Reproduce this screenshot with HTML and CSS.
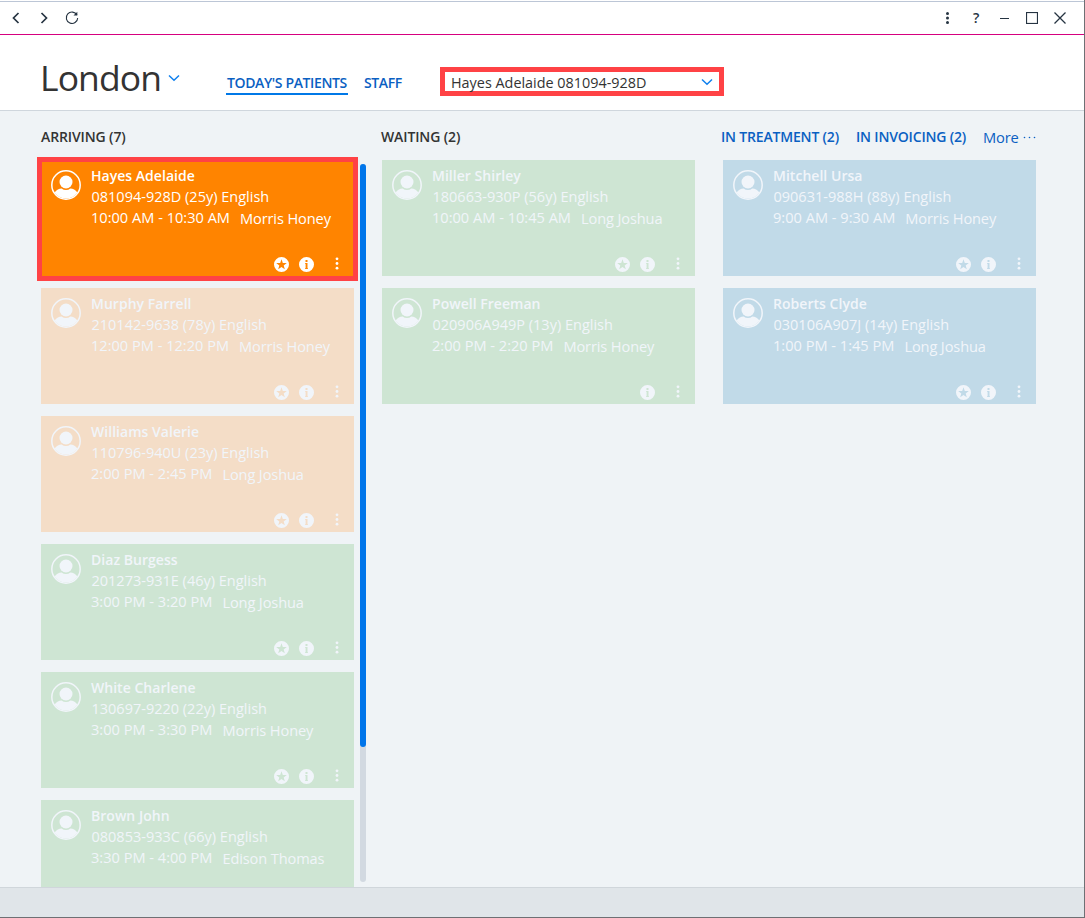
FILE: index.html
```
<!DOCTYPE html>
<html lang="en">
<head>
<meta charset="utf-8">
<title>London – Today's patients</title>
<link rel="stylesheet" href="styles.css">
</head>
<body>
<svg class="sprite" aria-hidden="true">
  <symbol id="avatar" viewBox="0 0 30 30">
    <circle cx="15" cy="15" r="14.2" fill="none" stroke="currentColor" stroke-width="1.5"/>
    <circle cx="15" cy="12" r="6.5" fill="currentColor"/>
    <path d="M3.6 22.6C5.6 19.6 8 18.6 10.6 18.4Q12.600 20 15 20Q17.400 20 19.400 18.400C22 18.600 24.400 19.600 26.400 22.600A14 14 0 0 1 3.600 22.600Z" fill="currentColor"/>
  </symbol>
  <symbol id="star" viewBox="0 0 15 15">
    <path fill-rule="evenodd" fill="currentColor" d="M7.500 0A7.500 7.500 0 1 1 7.500 15A7.500 7.500 0 1 1 7.500 0ZM7.500 2.200L6.200 5.900L2.200 6.100L5.300 8.500L4.200 12.300L7.500 10.100L10.800 12.300L9.700 8.500L12.800 6.100L8.800 5.900Z"/>
  </symbol>
  <symbol id="info" viewBox="0 0 15 15">
    <path fill-rule="evenodd" fill="currentColor" d="M7.500 0A7.500 7.500 0 1 1 7.500 15A7.500 7.500 0 1 1 7.500 0ZM6.500 3V5H8.500V3ZM6 6V6.700H6.600V11.300H6V12H9V11.300H8.500V6Z"/>
  </symbol>
  <symbol id="dots" viewBox="0 0 4 14">
    <circle cx="2" cy="1.800" r="1.400" fill="currentColor"/><circle cx="2" cy="6.500" r="1.400" fill="currentColor"/><circle cx="2" cy="11.200" r="1.400" fill="currentColor"/>
  </symbol>
  <symbol id="chevron" viewBox="0 0 12 8">
    <path d="M1 1.500L6 6.300L11 1.500" fill="none" stroke="currentColor" stroke-width="1.500"/>
  </symbol>
</svg>
<div class="window">
  <div class="titlebar">
    <div class="nav">
      <svg width="8" height="12" viewBox="0 0 8 12"><path d="M6.500 1L1.500 6L6.500 11" fill="none" stroke="currentColor" stroke-width="1.700"/></svg>
      <svg width="8" height="12" viewBox="0 0 8 12"><path d="M1.500 1L6.500 6L1.500 11" fill="none" stroke="currentColor" stroke-width="1.700"/></svg>
      <svg width="14" height="14" viewBox="0 0 14 14"><path d="M12 4A5.700 5.700 0 1 0 12.700 7" fill="none" stroke="currentColor" stroke-width="1.100"/><path d="M12.300 .8V4.600H8.500Z" fill="currentColor"/></svg>
    </div>
    <div class="controls">
      <svg width="4" height="12" viewBox="0 0 4 12"><circle cx="1.500" cy="1.600" r="1.500"/><circle cx="1.500" cy="6" r="1.500"/><circle cx="1.500" cy="10.400" r="1.500"/></svg>
      <span class="help">?</span>
      <svg width="10" height="12" viewBox="0 0 10 12"><path d="M0 6.500H9" stroke="currentColor"/></svg>
      <svg width="12" height="12" viewBox="0 0 12 12"><rect x=".5" y=".5" width="11" height="11" fill="none" stroke="currentColor" stroke-width="1.200"/></svg>
      <svg width="12" height="12" viewBox="0 0 12 12"><path d="M.5 .5L11.500 11.500M11.500 .5L.5 11.500" stroke="currentColor" stroke-width="1.300"/></svg>
    </div>
  </div>
  <header class="header">
    <h1 class="site">London</h1>
    <svg class="site-chevron" width="12" height="8"><use href="#chevron"/></svg>
    <nav class="tabs"><a class="tab active">TODAY'S PATIENTS</a><a class="tab staff">STAFF</a></nav>
    <div class="select"><span>Hayes Adelaide 081094-928D</span><svg width="12" height="8"><use href="#chevron"/></svg></div>
  </header>
  <main class="board">
    <section class="column">
      <h2 class="heading"><span class="h-arriving">ARRIVING (7)</span></h2>
      <div class="list">
        <article class="card selected"><svg class="avatar"><use href="#avatar"/></svg><div class="body"><div class="name">Hayes Adelaide</div><div class="ident">081094-928D (25y) English</div><div class="slot"><span>10:00 AM - 10:30 AM</span><span class="doctor">Morris Honey</span></div></div><div class="actions"><svg class="badge"><use href="#star"/></svg><svg class="badge"><use href="#info"/></svg><svg class="menu"><use href="#dots"/></svg></div></article>
        <article class="card orange"><svg class="avatar"><use href="#avatar"/></svg><div class="body"><div class="name">Murphy Farrell</div><div class="ident">210142-9638 (78y) English</div><div class="slot"><span>12:00 PM - 12:20 PM</span><span class="doctor">Morris Honey</span></div></div><div class="actions"><svg class="badge"><use href="#star"/></svg><svg class="badge"><use href="#info"/></svg><svg class="menu"><use href="#dots"/></svg></div></article>
        <article class="card orange"><svg class="avatar"><use href="#avatar"/></svg><div class="body"><div class="name">Williams Valerie</div><div class="ident">110796-940U (23y) English</div><div class="slot"><span>2:00 PM - 2:45 PM</span><span class="doctor">Long Joshua</span></div></div><div class="actions"><svg class="badge"><use href="#star"/></svg><svg class="badge"><use href="#info"/></svg><svg class="menu"><use href="#dots"/></svg></div></article>
        <article class="card green"><svg class="avatar"><use href="#avatar"/></svg><div class="body"><div class="name">Diaz Burgess</div><div class="ident">201273-931E (46y) English</div><div class="slot"><span>3:00 PM - 3:20 PM</span><span class="doctor">Long Joshua</span></div></div><div class="actions"><svg class="badge"><use href="#star"/></svg><svg class="badge"><use href="#info"/></svg><svg class="menu"><use href="#dots"/></svg></div></article>
        <article class="card green"><svg class="avatar"><use href="#avatar"/></svg><div class="body"><div class="name">White Charlene</div><div class="ident">130697-9220 (22y) English</div><div class="slot"><span>3:00 PM - 3:30 PM</span><span class="doctor">Morris Honey</span></div></div><div class="actions"><svg class="badge"><use href="#star"/></svg><svg class="badge"><use href="#info"/></svg><svg class="menu"><use href="#dots"/></svg></div></article>
        <article class="card green"><svg class="avatar"><use href="#avatar"/></svg><div class="body"><div class="name">Brown John</div><div class="ident">080853-933C (66y) English</div><div class="slot"><span>3:30 PM - 4:00 PM</span><span class="doctor">Edison Thomas</span></div></div></article>
      </div>
    </section>
    <div class="scrollbar"><div class="thumb"></div></div>
    <section class="column">
      <h2 class="heading"><span class="h-waiting">WAITING (2)</span></h2>
      <div class="list">
        <article class="card green"><svg class="avatar"><use href="#avatar"/></svg><div class="body"><div class="name">Miller Shirley</div><div class="ident">180663-930P (56y) English</div><div class="slot"><span>10:00 AM - 10:45 AM</span><span class="doctor">Long Joshua</span></div></div><div class="actions"><svg class="badge"><use href="#star"/></svg><svg class="badge"><use href="#info"/></svg><svg class="menu"><use href="#dots"/></svg></div></article>
        <article class="card green"><svg class="avatar"><use href="#avatar"/></svg><div class="body"><div class="name">Powell Freeman</div><div class="ident">020906A949P (13y) English</div><div class="slot"><span>2:00 PM - 2:20 PM</span><span class="doctor">Morris Honey</span></div></div><div class="actions"><svg class="badge"><use href="#info"/></svg><svg class="menu"><use href="#dots"/></svg></div></article>
      </div>
    </section>
    <section class="column last">
      <h2 class="heading links"><a class="h-treatment">IN TREATMENT (2)</a><a class="h-invoicing">IN INVOICING (2)</a><a class="more">More</a><svg width="13" height="3" viewBox="0 0 13 3"><circle cx="1.500" cy="1.500" r=".8"/><circle cx="6.500" cy="1.500" r=".8"/><circle cx="11.500" cy="1.500" r=".8"/></svg></h2>
      <div class="list">
        <article class="card blue"><svg class="avatar"><use href="#avatar"/></svg><div class="body"><div class="name">Mitchell Ursa</div><div class="ident">090631-988H (88y) English</div><div class="slot"><span>9:00 AM - 9:30 AM</span><span class="doctor">Morris Honey</span></div></div><div class="actions"><svg class="badge"><use href="#star"/></svg><svg class="badge"><use href="#info"/></svg><svg class="menu"><use href="#dots"/></svg></div></article>
        <article class="card blue"><svg class="avatar"><use href="#avatar"/></svg><div class="body"><div class="name">Roberts Clyde</div><div class="ident">030106A907J (14y) English</div><div class="slot"><span>1:00 PM - 1:45 PM</span><span class="doctor">Long Joshua</span></div></div><div class="actions"><svg class="badge"><use href="#star"/></svg><svg class="badge"><use href="#info"/></svg><svg class="menu"><use href="#dots"/></svg></div></article>
      </div>
    </section>
  </main>
  <footer class="footer"></footer>
</div>
</body>
</html>
```
FILE: styles.css
```
* { box-sizing: border-box; }
body { margin: 0; font-family: "Open Sans", "Noto Sans", sans-serif; font-size: 14px; color: #333; background: #fff; }
svg { display: block; flex: none; }
.sprite { position: absolute; width: 0; height: 0; }
.window { width: 1085px; height: 918px; display: flex; flex-direction: column; border-right: 1px solid #6e7074; border-bottom: 1px solid #6e7074; padding-top: 1px; overflow: hidden; }
.titlebar { height: 34px; flex: none; border-top: 1px solid #bcc6d6; border-bottom: 1px solid #d6007f; display: flex; justify-content: space-between; align-items: center; padding: 0 18px 0 12px; color: #263442; }
.nav { display: flex; align-items: center; gap: 20px; }
.nav svg:last-child { margin-left: -3px; }
.controls { display: flex; align-items: center; fill: currentColor; }
.help { font-weight: 600; font-size: 14px; line-height: 20px; width: 8px; margin: 0 19px 0 23px; }
.controls svg:nth-of-type(3) { margin: 0 16px; }
.header { height: 76px; flex: none; display: flex; align-items: flex-start; border-bottom: 1px solid #cfd6dd; padding-left: 40px; white-space: nowrap; }
.site { margin: 18px 0 0; width: 128px; font-size: 35.5px; font-weight: 400; line-height: 49px; letter-spacing: -.9px; color: #333; }
.site-chevron { margin-top: 39px; color: #1080ee; }
.tabs { display: flex; margin: 37px 0 0 46px; color: #0a60c2; font-weight: 600; line-height: 22px; letter-spacing: -.38px; }
.tab { height: 23px; padding-left: 1px; }
.tab.active { width: 122px; border-bottom: 2px solid #0078e7; }
.staff { margin-left: 15px; width: 76px; }
.select { width: 284px; height: 29px; margin-top: 32px; border: 5px solid #ff4245; display: flex; align-items: center; justify-content: space-between; padding: 0 6px; color: #333; margin-left: 1px; font-size: 14.4px; }
.select span { padding-top: 1px; }
.select svg { color: #1080ee; }
.board { flex: 1; min-height: 0; display: flex; background: #eff3f6; padding-left: 41px; overflow: hidden; }
.column { width: 313px; flex: none; }
.column.last { margin-left: 28px; }
.heading { margin: 0; height: 49px; padding-top: 16px; display: flex; font-size: 14px; font-weight: 600; line-height: 20px; letter-spacing: -.12px; color: #333; white-space: nowrap; }
.h-waiting { margin-left: -1px; }
.links { color: #0a60c2; fill: #0a60c2; width: 330px; margin-left: -2px; letter-spacing: -.18px; }
.h-treatment { width: 135px; }
.h-invoicing { width: 127px; }
.more { font-weight: 400; width: 40px; font-size: 14.700px; }
.links svg { margin-top: 9px; }
.list { display: flex; flex-direction: column; gap: 12px; }
.card { position: relative; height: 116px; flex: none; padding: 5px 15px 4px 10px; display: grid; grid-template-columns: 40px 1fr; grid-template-rows: 1fr 15px; color: #f1f5fa; white-space: nowrap; }
.green { background: #cee5d3; }
.orange { background: #f4ddc7; }
.blue { background: #c1dae8; }
.selected { background: #ff8400; color: #fff; }
.selected::after { content: ""; position: absolute; inset: -3px -4px -5px; border: 5px solid #ff4245; }
.avatar { width: 30px; height: 30px; margin-top: 5px; }
.name { font-weight: 600; line-height: 21px; letter-spacing: .03px; }
.ident { padding-left: .5px; font-size: 14.5px; line-height: 21px; }
.slot { display: flex; gap: 10px; font-size: 14.6px; line-height: 21px; }
.doctor { padding-top: 1px; letter-spacing: -.12px; }
.actions { grid-column: 1 / -1; display: flex; justify-content: flex-end; gap: 10px; }
.badge { width: 15px; height: 15px; }
.menu { width: 4px; height: 14px; margin-left: 11px; }
.scrollbar { width: 6px; height: 718px; margin: 53px 16px 0 6px; border-radius: 3px; background: #d2d9e1; flex: none; }
.thumb { height: 583px; border-radius: 3px; background: #0075ea; }
.footer { height: 30px; flex: none; background: #e0e5e9; border-top: 1px solid #d0d6db; }
```
